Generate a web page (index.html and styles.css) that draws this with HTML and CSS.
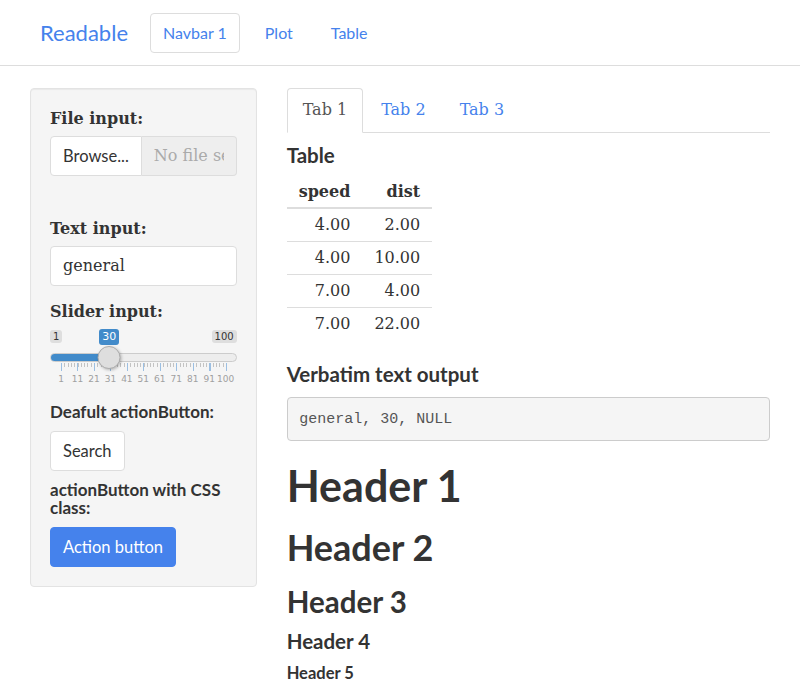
FILE: index.html
```html
<!DOCTYPE html>
<html lang="en">
<head>
<meta charset="utf-8">
<title>Readable</title>
<link rel="stylesheet" href="styles.css">
</head>
<body>
<nav class="navbar">
  <a class="brand">Readable</a>
  <ul class="nav">
    <li class="active"><a>Navbar 1</a></li>
    <li><a>Plot</a></li>
    <li><a>Table</a></li>
  </ul>
</nav>

<div class="page">
  <aside class="well">
    <div class="form-group file-group">
      <label>File input:</label>
      <div class="input-group">
        <span class="btn btn-default">Browse...</span>
        <span class="form-control readonly"><span class="clip">No file selected</span></span>
      </div>
    </div>

    <div class="form-group">
      <label>Text input:</label>
      <div class="form-control">general</div>
    </div>

    <div class="form-group">
      <label>Slider input:</label>
      <div class="irs">
        <div class="irs-minmax">
          <span class="irs-tag">1</span>
          <span class="irs-tag">100</span>
        </div>
        <span class="irs-single" style="left: calc(11px + (100% - 22px) * 0.2929)">30</span>
        <div class="irs-line">
          <div class="irs-bar" style="width: calc(11px + (100% - 22px) * 0.2929)"></div>
        </div>
        <span class="irs-handle" style="left: calc(11px + (100% - 22px) * 0.2929)"></span>
        <div class="irs-grid">
          <div class="irs-ticks"></div>
          <div class="irs-grid-text">
            <span style="left: 0%">1</span>
            <span style="left: 10%">11</span>
            <span style="left: 20%">21</span>
            <span style="left: 30%">31</span>
            <span style="left: 40%">41</span>
            <span style="left: 50%">51</span>
            <span style="left: 60%">61</span>
            <span style="left: 70%">71</span>
            <span style="left: 80%">81</span>
            <span style="left: 90%">91</span>
            <span style="left: 100%">100</span>
          </div>
        </div>
      </div>
    </div>

    <h5>Deafult actionButton:</h5>
    <div><span class="btn btn-default">Search</span></div>
    <h5>actionButton with CSS class:</h5>
    <div><span class="btn btn-primary">Action button</span></div>
  </aside>

  <main class="main">
    <ul class="nav-tabs">
      <li class="active"><a>Tab 1</a></li>
      <li><a>Tab 2</a></li>
      <li><a>Tab 3</a></li>
    </ul>

    <h4>Table</h4>
    <table class="data">
      <thead>
        <tr><th>speed</th><th>dist</th></tr>
      </thead>
      <tbody>
        <tr><td>4.00</td><td>2.00</td></tr>
        <tr><td>4.00</td><td>10.00</td></tr>
        <tr><td>7.00</td><td>4.00</td></tr>
        <tr><td>7.00</td><td>22.00</td></tr>
      </tbody>
    </table>

    <h4>Verbatim text output</h4>
    <pre class="verbatim">general, 30, NULL</pre>

    <h1>Header 1</h1>
    <h2>Header 2</h2>
    <h3>Header 3</h3>
    <h4>Header 4</h4>
    <h5>Header 5</h5>
  </main>
</div>
</body>
</html>
```

FILE: styles.css
```css
* { box-sizing: border-box; }

html, body { margin: 0; }

body {
  font-family: "DejaVu Serif", Georgia, serif;
  font-size: 16px;
  line-height: 1.42857;
  color: #333;
  background: #fff;
}

a { color: #4582ec; text-decoration: none; cursor: pointer; }

/* ---------- navbar ---------- */
.navbar {
  display: flex;
  align-items: center;
  height: 66px;
  padding: 0 40px;
  border-bottom: 1px solid #ddd;
  font-family: "Lato", "Open Sans", sans-serif;
}
.brand {
  font-size: 22px;
  margin-right: 22px;
}
.nav {
  display: flex;
  gap: 12px;
  list-style: none;
  margin: 0;
  padding: 0;
}
.nav a {
  display: block;
  height: 40px;
  line-height: 38px;
  padding: 0 12px;
  border: 1px solid transparent;
  border-radius: 4px;
  font-size: 16px;
}
.nav .active a { border-color: #ddd; }

/* ---------- page grid ---------- */
.page {
  display: grid;
  grid-template-columns: calc((100% + 30px) / 3 - 30px) 1fr;
  gap: 30px;
  padding: 0 30px;
  margin-top: 22px;
  align-items: start;
}

/* ---------- sidebar well ---------- */
.well {
  background: #f5f5f5;
  border: 1px solid #e3e3e3;
  border-radius: 4px;
  padding: 19px;
  box-shadow: inset 0 1px 1px rgba(0,0,0,.05);
}
.form-group { margin-bottom: 15px; }
.file-group { margin-bottom: 42px; }

label {
  display: block;
  font-weight: bold;
  margin-bottom: 5px;
}

.form-control {
  display: block;
  height: 40px;
  padding: 8px 12px;
  background: #fff;
  border: 1px solid #ddd;
  border-radius: 4px;
  line-height: 22px;
  color: #333;
  white-space: nowrap;
  overflow: hidden;
}
.clip { display: block; overflow: hidden; }

.input-group { display: flex; }
.input-group .btn {
  border-radius: 4px 0 0 4px;
  flex: none;
}
.input-group .form-control {
  flex: 1;
  min-width: 0;
  border-left: none;
  border-radius: 0 4px 4px 0;
}
.form-control.readonly { background: #eee; color: #aaa; }

.btn {
  display: inline-block;
  height: 40px;
  line-height: 38px;
  padding: 0 12px;
  border: 1px solid #ddd;
  border-radius: 4px;
  font-family: "Lato", "Open Sans", sans-serif;
  font-size: 16.5px;
  white-space: nowrap;
}
.btn-default { background: #fff; color: #333; }
.btn-primary { background: #4582ec; border-color: #4582ec; color: #fff; }

/* ---------- slider ---------- */
.irs {
  position: relative;
  height: 59px;
  font-family: "DejaVu Sans", sans-serif;
}
.irs-minmax {
  display: flex;
  justify-content: space-between;
  padding-top: 1px;
}
.irs-tag {
  background: #dedede;
  color: #333;
  font-size: 10px;
  line-height: 13px;
  padding: 0 3px;
  border-radius: 3px;
}
.irs-single {
  position: absolute;
  top: 0;
  transform: translateX(-50%);
  background: #428bca;
  color: #fff;
  font-size: 11px;
  line-height: 16px;
  padding: 0 3px;
  border-radius: 3px;
}
.irs-line {
  height: 9px;
  margin-top: 10px;
  background: #ededed;
  border: 1px solid #ccc;
  border-radius: 5px;
  overflow: hidden;
}
.irs-bar {
  height: 100%;
  background: #428bca;
}
.irs-handle {
  position: absolute;
  top: 17px;
  width: 23px;
  height: 23px;
  transform: translateX(-50%);
  background: #dedede;
  border: 1px solid #acacac;
  border-radius: 50%;
  box-shadow: 1px 1px 3px rgba(0,0,0,.25);
}
.irs-grid {
  margin: 1px 11px 0 11px;
}
.irs-ticks {
  height: 8px;
  margin-right: -1px;
  background:
    repeating-linear-gradient(to right, #9cbfe2 0 1px, transparent 1px 16.5px) 0 0 / 100% 8px no-repeat,
    repeating-linear-gradient(to right, #c3c3c3 0 1px, transparent 1px 3.3px) 0 0 / 100% 4px no-repeat;
}
.irs-grid-text {
  position: relative;
  height: 14px;
  color: #a0a0a0;
  font-size: 9px;
  line-height: 14px;
}
.irs-grid-text span {
  position: absolute;
  top: 1px;
  transform: translateX(-50%);
}

/* ---------- headings ---------- */
h1, h2, h3, h4, h5 {
  font-family: "Lato", "Open Sans", sans-serif;
  font-weight: 700;
  line-height: 1.1;
  color: #333;
}
h1 { font-size: 43px; margin: 21px 0 11.5px; }
h2 { font-size: 36px; margin: 18px 0 11.5px; }
h3 { font-size: 29.5px; margin: 19px 0 11.5px; }
h4 { font-size: 20.5px; margin: 11.5px 0; }
h5 { font-size: 16.5px; margin: 11px 0; }

.well h5 {
  font-size: 17px;
  line-height: 18px;
  margin: 0 0 11px;
}
.well div + h5 { margin: 10px 0 10px; }

/* ---------- tabs ---------- */
.nav-tabs {
  display: flex;
  list-style: none;
  margin: 0;
  padding: 0;
  border-bottom: 1px solid #ddd;
}
.nav-tabs li { margin-bottom: -1px; }
.nav-tabs a {
  display: block;
  padding: 10px 15px;
  margin-right: 2px;
  border: 1px solid transparent;
  border-radius: 4px 4px 0 0;
}
.nav-tabs .active a {
  color: #555;
  background: #fff;
  border-color: #ddd;
  border-bottom-color: transparent;
}

/* ---------- table ---------- */
.data {
  border-collapse: collapse;
  margin-bottom: 23px;
  line-height: 22px;
}
.data th, .data td {
  padding: 5px 12px;
  text-align: right;
}
.data th {
  padding: 3px 12px 4px;
  border-bottom: 2px solid #ddd;
}
.data td { border-top: 1px solid #ddd; }

/* ---------- verbatim ---------- */
.verbatim {
  margin: 0 0 11.5px;
  padding: 9.5px 11.5px;
  background: #f5f5f5;
  border: 1px solid #ccc;
  border-radius: 4px;
  font-family: "Liberation Mono", "Courier New", monospace;
  font-size: 15px;
  line-height: 23px;
  color: #555;
}
```
